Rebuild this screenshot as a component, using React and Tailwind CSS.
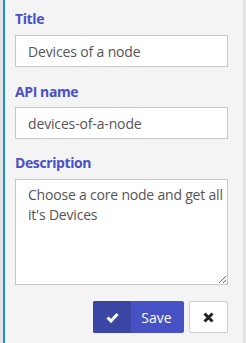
export default function App() {
  return (
    <div
      className="flex h-[343px] w-[246px] bg-[#e4e4e4]"
      style={{ fontFamily: '"Open Sans", sans-serif' }}
    >
      <div className="w-[3px] bg-[#e4e4e4]" />
      <div className="flex flex-1 flex-col border-l-2 border-[#1f8dd6] bg-[#f4f4f4] pl-[10px] pr-[15px] pt-[9px]">
        <label className="text-[14px] font-bold leading-[20px] tracking-[-0.4px] text-[#4b50c6]">Title</label>
        <input
          className="mt-[6px] h-[32px] w-full border border-[#c8c8c8] bg-white px-[12px] text-[14px] tracking-[-0.15px] text-[#555] outline-none"
          defaultValue="Devices of a node"
        />
        <label className="mt-[15px] text-[14px] font-bold leading-[20px] tracking-[-0.4px] text-[#4b50c6]">API name</label>
        <input
          className="mt-[5px] h-[32px] w-full border border-[#c8c8c8] bg-white px-[12px] text-[14px] tracking-[-0.15px] text-[#555] outline-none"
          defaultValue="devices-of-a-node"
        />
        <label className="mt-[14px] text-[14px] font-bold leading-[20px] tracking-[-0.4px] text-[#4b50c6]">Description</label>
        <textarea
          className="mt-[6px] h-[106px] w-full resize-y border border-[#c8c8c8] bg-white pl-[12px] pr-[2px] py-[5px] text-[14px] leading-[20px] tracking-[-0.2px] text-[#555] outline-none"
          defaultValue="Choose a core node and get all it's Devices"
        />
        <div className="mt-[16px] flex justify-end gap-[5px]">
          <button className="flex h-[32px] w-[91px] overflow-hidden rounded-[2px] bg-[#4651c6] text-[14px] text-white">
            <span className="flex h-full w-[38px] items-center justify-center bg-[#3a45a4]">
              <svg width="13" height="11" viewBox="0 0 13 11">
                <path d="M1.5 5.5 L5 9 L11.5 2" fill="none" stroke="white" strokeWidth="3" />
              </svg>
            </span>
            <span className="flex flex-1 items-center justify-center pr-[2px]">Save</span>
          </button>
          <button className="flex h-[32px] w-[39px] items-center justify-center rounded-[2px] border border-[#cfcfcf] bg-white">
            <svg width="11" height="11" viewBox="0 0 11 11">
              <path d="M1.5 1.5 L9.5 9.5 M9.5 1.5 L1.5 9.5" stroke="#222" strokeWidth="3" />
            </svg>
          </button>
        </div>
      </div>
      <div className="w-[3px] border-l border-[#dcdcdc] bg-[#e4e4e4]" />
    </div>
  );
}
